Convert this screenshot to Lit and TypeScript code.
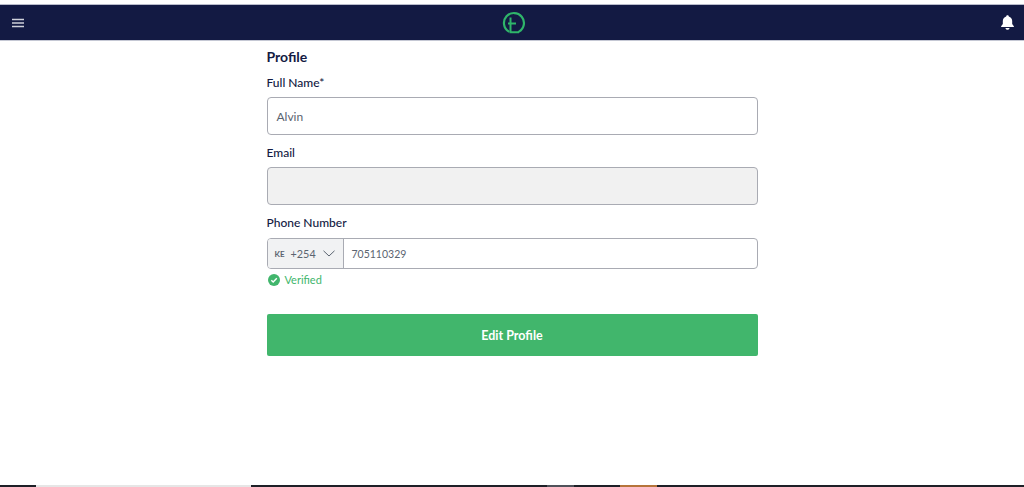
import { LitElement, html, css } from "lit";
import { customElement } from "lit/decorators.js";

@customElement("app-root")
export class AppRoot extends LitElement {
  static styles = css`
    :host {
      display: flex;
      flex-direction: column;
      height: 487px;
      overflow: hidden;
      background: #fff;
      font-family: Lato, "Open Sans", sans-serif;
      color: #131a43;
    }
    .topline { height: 5px; background: #fff; border-bottom: 1px solid #b9bccb; box-sizing: border-box; flex: none; }
    header {
      height: 36px;
      flex: none;
      background: #131a43;
      border-bottom: 1px solid #c5c8d4;
      box-sizing: border-box;
      display: grid;
      grid-template-columns: 1fr auto 1fr;
      align-items: center;
      padding: 0 9px 0 12px;
    }
    header svg { display: block; }
    .bell { justify-self: end; }
    main { flex: 1; display: flex; justify-content: center; }
    .form { width: 491px; display: flex; flex-direction: column; }
    h1 { margin: 7px 0 0; font-size: 14px; line-height: 17px; font-weight: 700; }
    label { display: block; font-size: 12px; line-height: 15px; font-weight: 500; }
    .first { margin-top: 10px; }
    .field {
      box-sizing: border-box;
      height: 38px;
      margin-top: 7px;
      border: 1px solid #a9abb3;
      border-radius: 4px;
      padding: 0 9px;
      display: flex;
      align-items: center;
      font-size: 12px;
      color: #5b6470;
    }
    .field.off { background: #f1f1f1; }
    .next { margin-top: 10px; }
    .phone {
      box-sizing: border-box;
      height: 31px;
      margin-top: 8px;
      border: 1px solid #a9abb3;
      border-radius: 4px;
      display: flex;
      align-items: stretch;
      font-size: 11px;
      color: #5b6470;
    }
    .code {
      width: 76px;
      flex: none;
      box-sizing: border-box;
      background: #f1f2f3;
      border-right: 1px solid #a9abb3;
      border-radius: 3px 0 0 3px;
      display: flex;
      align-items: center;
      padding-left: 7px;
    }
    .iso { font-size: 8px; font-weight: 700; margin-right: 6px; }
    .dial { font-size: 10.8px; }
    .code svg { margin-left: 7px; }
    .num { display: flex; align-items: center; padding-left: 8px; font-size: 10.5px; }
    .verified {
      display: flex;
      align-items: center;
      gap: 5px;
      margin: 4px 0 0 1px;
      font-size: 11px;
      line-height: 14px;
      color: #41b66c;
    }
    button {
      margin-top: 27px;
      height: 42px;
      border: none;
      border-radius: 2px;
      background: #41b66c;
      color: #fff;
      font: 700 12.5px Lato, sans-serif;
      padding: 0;
    }
    .strip { height: 2px; flex: none; display: flex; background: #1e2027; }
    .strip i { display: block; }
    .s1 { width: 36px; }
    .s2 { width: 215px; background: #e6e6e6; }
    .s3 { width: 296px; }
    .s4 { width: 27px; background: #50525a; }
    .s5 { width: 46px; }
    .s6 { width: 37px; background: #b5743a; }
  `;

  render() {
    return html`
      <div class="topline"></div>
      <header>
        <svg width="12" height="10" viewBox="0 0 12 10" fill="none" stroke="#cfd1da" stroke-width="1.3">
          <path d="M0 1.5H12M0 5H12M0 8.5H12" />
        </svg>
        <svg width="24" height="24" viewBox="0 0 24 24" fill="none" stroke="#2fb56a" stroke-width="2.2">
          <path d="M6.500 20.400A10 10 0 1 1 17 20.660" stroke-linecap="round" />
          <path d="M8.500 6.500V21.200H17M6 12.500H14" stroke-width="2" />
        </svg>
        <svg class="bell" width="15" height="17" viewBox="0 0 16 17" fill="#fff">
          <path d="M8 .8c.8 0 1.300.5 1.400 1.200C11.700 2.600 13 4.600 13 7v3.200l1.800 2.300v.8H1.200v-.8L3 10.200V7c0-2.400 1.300-4.400 3.600-5C6.700 1.300 7.200.8 8 .8Z" />
          <path d="M5.800 14.300h4.400C10 15.500 9.100 16.200 8 16.200s-2-.7-2.200-1.900Z" />
        </svg>
      </header>
      <main>
        <div class="form">
          <h1>Profile</h1>
          <label class="first">Full Name*</label>
          <div class="field">Alvin</div>
          <label class="next">Email</label>
          <div class="field off"></div>
          <label class="next">Phone Number</label>
          <div class="phone">
            <div class="code">
              <span class="iso">KE</span><span class="dial">+254</span>
              <svg width="12" height="7" viewBox="0 0 12 7" fill="none" stroke="#5b6470" stroke-width="1">
                <path d="M.5.8 6 6l5.500-5.200" />
              </svg>
            </div>
            <div class="num">705110329</div>
          </div>
          <div class="verified">
            <svg width="12" height="12" viewBox="0 0 12 12">
              <circle cx="6" cy="6" r="6" fill="#41b66c" />
              <path d="M3.300 6.200 5.200 8 8.800 4.300" fill="none" stroke="#fff" stroke-width="1.400" />
            </svg>
            <span>Verified</span>
          </div>
          <button>Edit Profile</button>
        </div>
      </main>
      <div class="strip">
        <i class="s1"></i><i class="s2"></i><i class="s3"></i><i class="s4"></i><i class="s5"></i><i class="s6"></i>
      </div>
    `;
  }
}
